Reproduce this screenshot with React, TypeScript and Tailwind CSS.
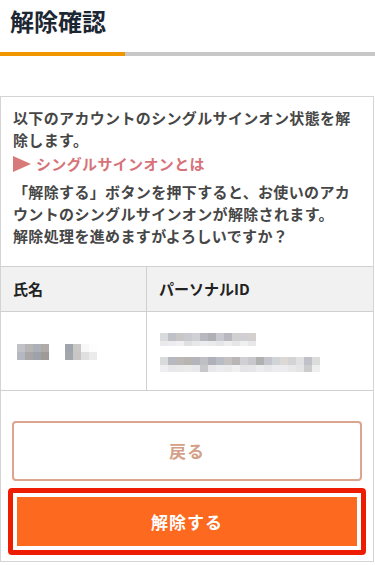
const nameBlur = [
  ["#c0c2c8", "#b8b5b5", "#aeb0b8", "#b0aaa8", "#ffffff", "#ffffff", "#a0a4ac", "#cac8c6", "#f8f8f8", "#fdfdfd"],
  ["#b5b8c0", "#a8a6a6", "#9fa2aa", "#9f9a98", "#ffffff", "#ffffff", "#a4a6ae", "#c8c6c4", "#e0e0e0", "#ebebeb"],
];

const idLine1 = [
  ["#d8dadc", "#c0c0c8", "#c8c6c6", "#c8cad0", "#d0d0d4", "#b8b8c0", "#b0b0b4", "#c8c8d0", "#b8b8be", "#d0d0d0", "#d0d0d4", "#d4d0d0"],
  ["#eaeaec", "#ececf0", "#f0f0f2", "#e0e0e2", "#e8e8ea", "#ececee", "#eaeaec", "#e6e6e8", "#eeeeee", "#e6e6e8", "#f0f0f0", "#e8e8e8"],
];

const idLine2 = [
  ["#d8dadc", "#b8b8c0", "#bcb8b8", "#b8b4b0", "#b4b4bc", "#c0c0c4", "#b0b0b8", "#b8bcc4", "#c4c2c0", "#b8b6b6", "#d0d0d4", "#c8c8cc", "#b0b0b0", "#c4c4cc", "#d0d4d8", "#dcd8d4", "#d4d4d6", "#e0e0e0", "#c0c0c8", "#dcdcdc"],
  ["#eeeef0", "#e8e8ea", "#e8eaea", "#ecebeb", "#e8e8ea", "#c8c8ca", "#e8e8ea", "#ececee", "#eaeaec", "#f0f0f0", "#e4e4e6", "#e6e6e8", "#ececee", "#e8e8ea", "#ececee", "#ececee", "#e8e8e8", "#e4e4e4", "#cccccc", "#eeeeee"],
];

// mosaic used to hide personal data
const Mosaic = ({ rows, heights }: { rows: string[][]; heights: number[] }) => (
  <div className="flex flex-col">
    {rows.map((row, r) => (
      <div key={r} className="flex">
        {row.map((c, i) => (
          <div key={i} className="w-[8px]" style={{ backgroundColor: c, height: heights[r] }} />
        ))}
      </div>
    ))}
  </div>
);

const App = () => {
  return (
    <div className="w-[375px] h-[565px] overflow-hidden bg-white font-['Noto_Sans_CJK_JP','Noto_Sans',sans-serif]">
      {/* Page title */}
      <div className="h-[52px] pl-[10px] pt-[5px]">
        <h1 className="text-[24px] leading-[32px] font-bold text-[#1d2733]">解除確認</h1>
      </div>
      <div className="flex h-[4px]">
        <div className="w-[125px] bg-[#f29600]" />
        <div className="flex-1 bg-[#c8c8c8]" />
      </div>

      <div className="mt-[40px] w-[374px] border border-[#d4d4d4] pb-[6px]">
        <div className="px-3 pt-[10px] pb-[19px] text-[15px] leading-[22px] font-bold text-[#464646] tracking-[0.35px]">
          <p>以下のアカウントのシングルサインオン状態を解除します。</p>
          <a href="#" className="mt-[2px] flex items-center gap-[5px] text-[#d6737a]">
            <svg width="18" height="16" viewBox="0 0 18 16" className="shrink-0">
              <polygon points="0,0 18,8 0,16" fill="#d87a7a" />
            </svg>
            シングルサインオンとは
          </a>
          <p className="mt-[6px]">
            「解除する」ボタンを押下すると、お使いのアカウントのシングルサインオンが解除されます。
            <br />
            解除処理を進めますがよろしいですか？
          </p>
        </div>

        {/* Account table */}
        <div className="flex border-y border-[#d0d0d0] bg-[#f1f1f1] h-[46px]">
          <div className="w-[146px] border-r border-[#d0d0d0] flex items-center pl-3 text-[15px] font-bold text-[#222]">氏名</div>
          <div className="flex-1 flex items-center pl-3 text-[15px] font-bold text-[#222]">パーソナルID</div>
        </div>
        <div className="flex border-b border-[#d0d0d0] h-[79px]">
          <div className="w-[146px] border-r border-[#d0d0d0] flex items-center pl-4 pt-[2px]">
            <Mosaic rows={nameBlur} heights={[8, 8]} />
          </div>
          <div className="flex-1 flex flex-col justify-center gap-[11px] pl-[13px] pt-[2px]">
            <Mosaic rows={idLine1} heights={[8, 5]} />
            <Mosaic rows={idLine2} heights={[8, 7]} />
          </div>
        </div>

        {/* Actions */}
        <div className="mt-[30px] px-[11px]">
          <button className="w-full h-[60px] rounded-[4px] border-2 border-[#dba58f] bg-white text-[17px] font-bold text-[#d4a088] tracking-[1px]">
            戻る
          </button>
        </div>
        <div className="mt-[7px] px-[7px]">
          <div className="rounded-[4px] border-[5px] border-[#ee1c00] bg-white p-[4px]">
            <button className="w-full h-[49px] bg-[#fd6a1f] text-[17px] font-bold text-white tracking-[1px]">
              解除する
            </button>
          </div>
        </div>
      </div>
    </div>
  );
};

export default App;
